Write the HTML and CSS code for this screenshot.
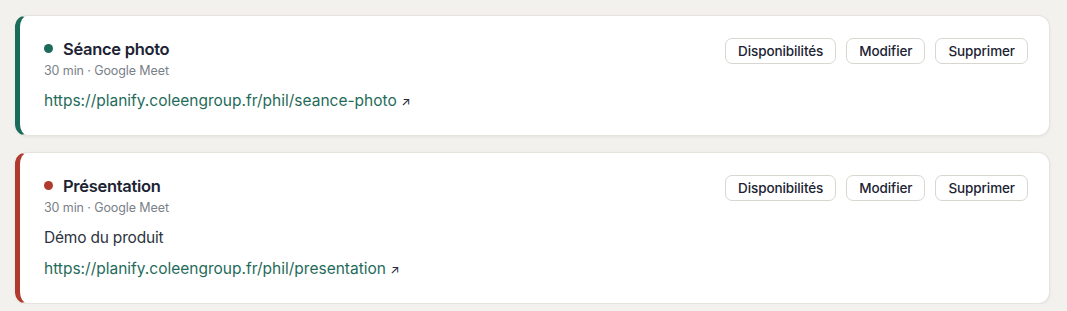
FILE: index.html
```html
<!DOCTYPE html>
<html lang="fr">
<head>
<meta charset="utf-8">
<link rel="stylesheet" href="styles.css">
</head>
<body>
<div class="list">
  <div class="card green">
    <div class="info">
      <div class="title-row"><span class="dot"></span><span class="title">Séance photo</span></div>
      <div class="meta">30 min · Google Meet</div>
      <a class="link" href="#">https://planify.coleengroup.fr/phil/seance-photo <span class="arrow">↗</span></a>
    </div>
    <div class="actions">
      <button class="btn">Disponibilités</button>
      <button class="btn">Modifier</button>
      <button class="btn">Supprimer</button>
    </div>
  </div>
  <div class="card red">
    <div class="info">
      <div class="title-row"><span class="dot"></span><span class="title">Présentation</span></div>
      <div class="meta">30 min · Google Meet</div>
      <div class="desc">Démo du produit</div>
      <a class="link" href="#">https://planify.coleengroup.fr/phil/presentation <span class="arrow">↗</span></a>
    </div>
    <div class="actions">
      <button class="btn">Disponibilités</button>
      <button class="btn">Modifier</button>
      <button class="btn">Supprimer</button>
    </div>
  </div>
</div>
</body>
</html>
```
FILE: styles.css
```css
* { box-sizing: border-box; }
html, body { margin: 0; }
body {
  background: #f3f1ed;
  font-family: "Inter", "Liberation Sans", sans-serif;
  color: #1c2333;
  padding: 15px 17px 0 15px;
}
.list { display: flex; flex-direction: column; gap: 16px; }
.card {
  background: #fff;
  border: 1px solid #e6e2dc;
  border-left: 5px solid #1a6b5a;
  border-radius: 12px;
  box-shadow: 0 1px 3px rgba(0,0,0,0.06);
  display: flex;
  justify-content: space-between;
  align-items: flex-start;
  padding: 22px 21px 25px 24px;
}
.card.red { border-left-color: #b03a2e; }
.info { display: flex; flex-direction: column; }
.title-row { display: flex; align-items: center; gap: 10px; height: 21px; }
.dot { width: 9px; height: 9px; border-radius: 50%; background: #1a6b5a; }
.red .dot { background: #b03a2e; }
.title { font-size: 16.5px; font-weight: 600; letter-spacing: -0.3px; color: #1c2333; }
.meta { font-size: 12.5px; color: #7a7f88; margin-top: 4px; letter-spacing: -0.1px; }
.desc { font-size: 15.5px; color: #2d3340; margin-top: 13px; letter-spacing: -0.2px; }
.link {
  font-size: 15.5px; color: #1f6b5a; text-decoration: none; margin-top: 13px;
}
.desc + .link { margin-top: 12px; }
.arrow { font-size: 12px; color: #1c2333; }
.actions { display: flex; gap: 10px; }
.btn {
  font-family: inherit;
  font-size: 13.5px;
  font-weight: 500;
  color: #1c2333;
  background: #fff;
  border: 1px solid #d9d6d0;
  border-radius: 7px;
  height: 26px;
  padding: 0 12px;
  letter-spacing: -0.1px;
}
```
